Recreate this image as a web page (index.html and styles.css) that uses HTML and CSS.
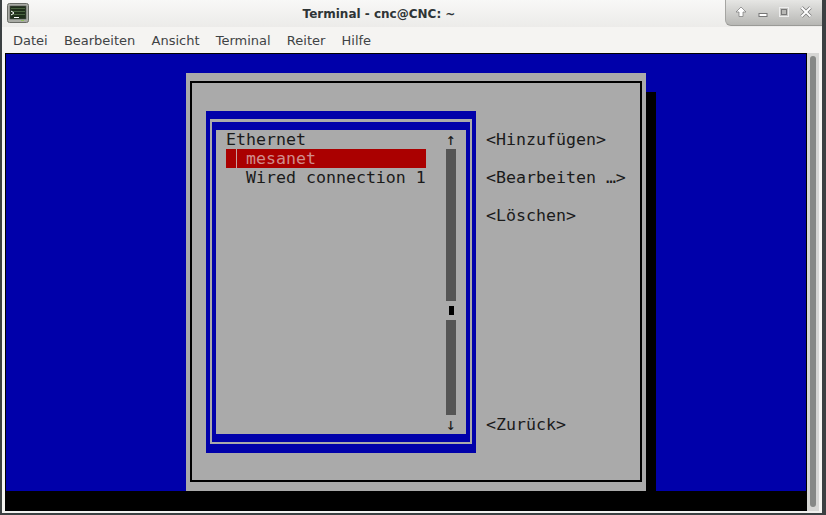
FILE: index.html
```html
<!DOCTYPE html>
<html lang="de">
<head>
<meta charset="utf-8">
<title>Terminal - cnc@CNC: ~</title>
<link rel="stylesheet" href="styles.css">
</head>
<body>
<div class="window">
  <header class="titlebar">
    <svg class="app-icon" width="22" height="20" viewBox="0 0 22 20">
      <rect x="0.5" y="0.5" width="21" height="19" rx="2" fill="#a9aba5" stroke="#686a65"/>
      <rect x="3" y="3" width="16" height="13" fill="#1f2e1a" stroke="#4c4e49" stroke-width=".6"/>
      <path d="M4 5.5h14M4 8.5h14M4 11.5h14" stroke="#4a6340" stroke-width="1"/>
      <path d="M4 8l3 2-3 2" fill="none" stroke="#fff" stroke-width="1"/>
      <rect x="7" y="14" width="5" height="1" fill="#fff"/>
      <rect x="14" y="17" width="3" height="1" fill="#8fbf5a"/>
    </svg>
    <h1 class="title">Terminal - cnc@CNC: ~</h1>
    <div class="controls">
      <svg width="12" height="12" viewBox="0 0 12 12"><path d="M6 1l5 5H8v4.500H4V6H1z" fill="#fff" stroke="#777" stroke-width=".7"/></svg>
      <svg width="12" height="12" viewBox="0 0 12 12"><rect x="2" y="7.500" width="8" height="3" fill="#fff" stroke="#777"/></svg>
      <svg width="12" height="12" viewBox="0 0 12 12"><rect x="1.500" y="1.500" width="9" height="9" fill="#c4c4c1" stroke="#eee"/><rect x="3.500" y="3.500" width="5" height="5" fill="#b8b8b5" stroke="#777"/></svg>
      <svg width="12" height="12" viewBox="0 0 12 12"><path d="M1.500 1.500l9 9M10.500 1.500l-9 9" stroke="#777" stroke-width="3.400"/><path d="M1.500 1.500l9 9M10.500 1.500l-9 9" stroke="#fff" stroke-width="2"/></svg>
    </div>
  </header>
  <nav class="menubar">
    <span class="menu-item">Datei</span>
    <span class="menu-item">Bearbeiten</span>
    <span class="menu-item">Ansicht</span>
    <span class="menu-item">Terminal</span>
    <span class="menu-item">Reiter</span>
    <span class="menu-item">Hilfe</span>
  </nav>
  <div class="content">
    <main class="terminal">
      <div class="screen">
        <section class="dialog">
          <div class="dialog-frame">
            <div class="list-box">
              <div class="list-line">
                <div class="list-inner">
                  <div class="list-items">
                    <div class="row">Ethernet</div>
                    <div class="row selected"><span class="marker"></span><span class="sel-text">mesanet</span></div>
                    <div class="row child">Wired connection 1</div>
                  </div>
                  <div class="scroll">
                    <div class="arrow">↑</div>
                    <div class="scroll-bar top"></div>
                    <div class="scroll-knob"><span></span></div>
                    <div class="scroll-bar bottom"></div>
                    <div class="arrow">↓</div>
                  </div>
                </div>
              </div>
            </div>
            <div class="actions">
              <div class="action">&lt;Hinzufügen&gt;</div>
              <div class="action">&lt;Bearbeiten …&gt;</div>
              <div class="action">&lt;Löschen&gt;</div>
              <div class="action back">&lt;Zurück&gt;</div>
            </div>
          </div>
        </section>
        <div class="shadow"></div>
      </div>
      <div class="status"></div>
    </main>
    <aside class="scrollbar"><div class="thumb"></div></aside>
  </div>
  <div class="bottom-edge"></div>
</div>
</body>
</html>
```
FILE: styles.css
```css
* { box-sizing: border-box; }
html, body { margin: 0; height: 100%; overflow: hidden; background: #3b4042; }
.window {
  width: 820px;
  height: 513px;
  margin-left: 2px;
  display: flex;
  flex-direction: column;
  background: #f5f4f2;
  font-family: "DejaVu Sans", sans-serif;
}
.titlebar {
  height: 27px;
  flex: none;
  display: flex;
  align-items: center;
  position: relative;
  padding-left: 5px;
  background: linear-gradient(#f8f8f7, #ecebe9);
}
.app-icon { flex: none; margin-top: -1px; }
.title {
  position: absolute;
  left: 0;
  right: 0;
  top: 7px;
  margin: 0;
  padding-right: 66px;
  text-align: center;
  font-size: 12px;
  line-height: 15px;
  font-weight: 700;
  color: #2e3436;
}
.controls {
  position: absolute;
  right: 0;
  top: 0;
  width: 97px;
  height: 26px;
  padding: 0 10px 1px 9px;
  display: flex;
  align-items: center;
  justify-content: space-between;
  background: linear-gradient(#e6e6e4, #b7b7b4);
  border-bottom: 1px solid #9a9a97;
  border-left: 1px solid #a5a5a2;
  border-bottom-left-radius: 6px;
}
.menubar {
  height: 26px;
  flex: none;
  display: flex;
  gap: 16.2px;
  padding: 5px 0 0 11px;
  font-size: 13px;
  line-height: 17px;
  color: #3f4345;
}
.content { flex: 1; min-height: 0; display: flex; padding-left: 3px; }
.terminal {
  width: 802px;
  flex: none;
  display: flex;
  flex-direction: column;
  border: solid #000;
  border-width: 1px 1px 0 1px;
  background: #000;
}
.screen {
  height: 437px;
  flex: none;
  padding: 19px 0 0 180px;
  display: flex;
  background: #0000aa;
}
.dialog {
  width: 460px;
  height: 418px;
  padding: 8px 4px 9px;
  background: #aaaaaa;
  flex: none;
}
.dialog-frame {
  height: 100%;
  display: flex;
  padding: 28px 0 0 14px;
  border: 2px solid #000;
}
.list-box {
  width: 270px;
  height: 342px;
  flex: none;
  padding: 8px 4px 9px;
  background: #0000aa;
}
.list-line { height: 100%; padding: 3px 2px 2px; background: #aaa; }
.list-inner {
  height: 100%;
  display: flex;
  background: #aaa;
  border: solid #0000aa;
  border-width: 8px 4px;
  padding: 0 0 0 10px;
  font: 16.6px/19px "DejaVu Sans Mono", monospace;
  color: #1a1a1a;
}
.list-items { width: 200px; flex: none; }
.row { height: 19px; white-space: pre; }
.selected { display: flex; background: #aa0000; color: #d08c8c; }
.marker { width: 11px; border-right: 1px solid #c9a0a0; margin-right: 9px; }
.child { padding-left: 20px; }
.scroll { width: 10px; margin-left: 20px; display: flex; flex-direction: column; align-items: center; }
.arrow { height: 19px; width: 10px; flex: none; text-align: center; }
.scroll-bar { width: 10px; flex: none; background: #555; }
.scroll-bar.top { height: 152px; }
.scroll-bar.bottom { height: 95px; }
.scroll-knob { height: 19px; flex: none; display: flex; align-items: center; justify-content: center; }
.scroll-knob span { width: 5px; height: 9px; background: #000; }
.actions {
  flex: 1;
  display: flex;
  flex-direction: column;
  padding: 19px 0 0 10px;
  font: 16.6px/19px "DejaVu Sans Mono", monospace;
  color: #1a1a1a;
  gap: 19px;
}
.action { height: 19px; white-space: pre; }
.back { margin-top: 171px; }
.shadow { width: 10px; height: 399px; margin-top: 19px; background: #000; flex: none; }
.status { height: 20px; flex: none; background: #000; }
.scrollbar {
  width: 12px;
  flex: none;
  padding: 3px 2px 4px 3px;
  background: #d6d6d4;
}
.thumb { height: 100%; width: 6px; border-radius: 3px; background: #868886; }
.bottom-edge { height: 2px; flex: none; background: #f0f0ee; }
```
